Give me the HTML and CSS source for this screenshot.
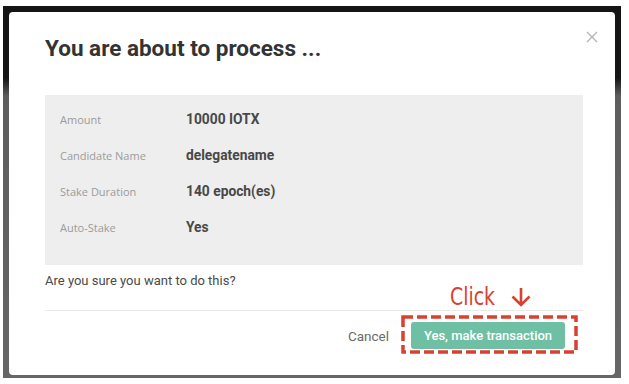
FILE: index.html
```html
<!DOCTYPE html>
<html>
  <head>
    <meta charset="UTF-8" />
    <title>Confirm transaction</title>
    <link rel="stylesheet" href="styles.css">
  </head>
  <body>
    <div class="overlay">
      <div class="modal">
        <button class="close" aria-label="Close">
          <svg width="12" height="12" viewBox="0 0 12 12">
            <path d="M1 1 L11 11 M11 1 L1 11" stroke="#b3b3b3" stroke-width="1.3" fill="none" />
          </svg>
        </button>
        <h1 class="title">You are about to process ...</h1>
        <div class="summary">
          <div class="row"><span class="label">Amount</span><span class="value">10000 IOTX</span></div>
          <div class="row"><span class="label">Candidate Name</span><span class="value">delegatename</span></div>
          <div class="row"><span class="label">Stake Duration</span><span class="value">140 epoch(es)</span></div>
          <div class="row"><span class="label">Auto-Stake</span><span class="value">Yes</span></div>
        </div>
        <p class="question">Are you sure you want to do this?</p>
        <div class="footer">
          <button class="cancel">Cancel</button>
          <div class="target">
            <button class="confirm">Yes, make transaction</button>
            <!-- tutorial annotation -->
            <svg class="highlight" width="177" height="39">
              <rect x="2" y="2" width="173" height="35" stroke="#d8412f" stroke-width="3.5" stroke-dasharray="10 4" fill="none" />
            </svg>
            <div class="note">
              <span class="note-text">Click</span>
              <svg width="22" height="20" viewBox="0 0 22 20">
                <path d="M11 1 V18 M2.5 9.5 L11 18 L19.5 9.5" stroke="#d8412f" stroke-width="2.6" fill="none" />
              </svg>
            </div>
          </div>
        </div>
      </div>
    </div>
  </body>
</html>
```

FILE: styles.css
```css
/* page + dimmed backdrop */
body {
  margin: 0;
  padding: 0;
  background: #fff;
}
.overlay {
  margin: 6px 8px 6px 3px;
  padding: 6px 6px 3px 6px;
  height: 363px;
  background: linear-gradient(#151515 0, #151515 72px, #5d5d5d 90px, #666 100%);
}

/* modal */
.modal {
  position: relative;
  height: 100%;
  box-sizing: border-box;
  padding: 23px 32px 0 36px;
  background: #fff;
  border-radius: 4px;
  font-family: "Open Sans", sans-serif;
}
.close {
  position: absolute;
  top: 19px;
  right: 17px;
  padding: 0;
  border: none;
  background: none;
  cursor: pointer;
}
.title {
  margin: 0;
  font-family: Roboto, "Liberation Sans", sans-serif;
  font-size: 22.5px;
  line-height: 26px;
  font-weight: 700;
  color: #333;
  letter-spacing: 0;
}

/* summary box */
.summary {
  margin-top: 34px;
  padding: 6px 15px 20px;
  background: #eeeeee;
}
.row {
  display: flex;
  align-items: center;
  height: 36px;
}
.label {
  width: 126px;
  font-size: 11px;
  color: #9b9b9b;
}
.value {
  font-family: Roboto, "Liberation Sans", sans-serif;
  font-size: 13.8px;
  font-weight: 700;
  color: #484848;
}
.question {
  margin: 7px 0 0;
  font-family: Roboto, "Liberation Sans", sans-serif;
  font-size: 13px;
  line-height: 18px;
  color: #4a4a4a;
}

/* footer */
.footer {
  display: flex;
  justify-content: flex-end;
  align-items: center;
  gap: 22px;
  margin-top: 20px;
  padding: 11px 18px 0 0;
  border-top: 1px solid #eaeaea;
}
.cancel {
  padding: 0;
  border: none;
  background: none;
  font-family: Roboto, "Liberation Sans", sans-serif;
  font-size: 13.5px;
  color: #6a6a6a;
  cursor: pointer;
}
.target {
  position: relative;
}
.confirm {
  display: block;
  width: 154px;
  height: 27px;
  padding: 0;
  border: none;
  border-radius: 3px;
  background: #6fbfa4;
  color: #fff;
  font-family: Roboto, "Liberation Sans", sans-serif;
  font-size: 13px;
  font-weight: 500;
  cursor: pointer;
}
.highlight {
  position: absolute;
  top: -7px;
  left: -10px;
}
.note {
  position: absolute;
  top: -38px;
  left: 39px;
  display: flex;
  align-items: center;
  gap: 6px;
  color: #d8412f;
  font-family: "DejaVu Sans Condensed", "DejaVu Sans", sans-serif;
  font-stretch: condensed;
  font-size: 25px;
  line-height: 26px;
  white-space: nowrap;
}
.note-text {
  display: inline-block;
  transform: scaleX(0.84);
  transform-origin: left center;
}
```
